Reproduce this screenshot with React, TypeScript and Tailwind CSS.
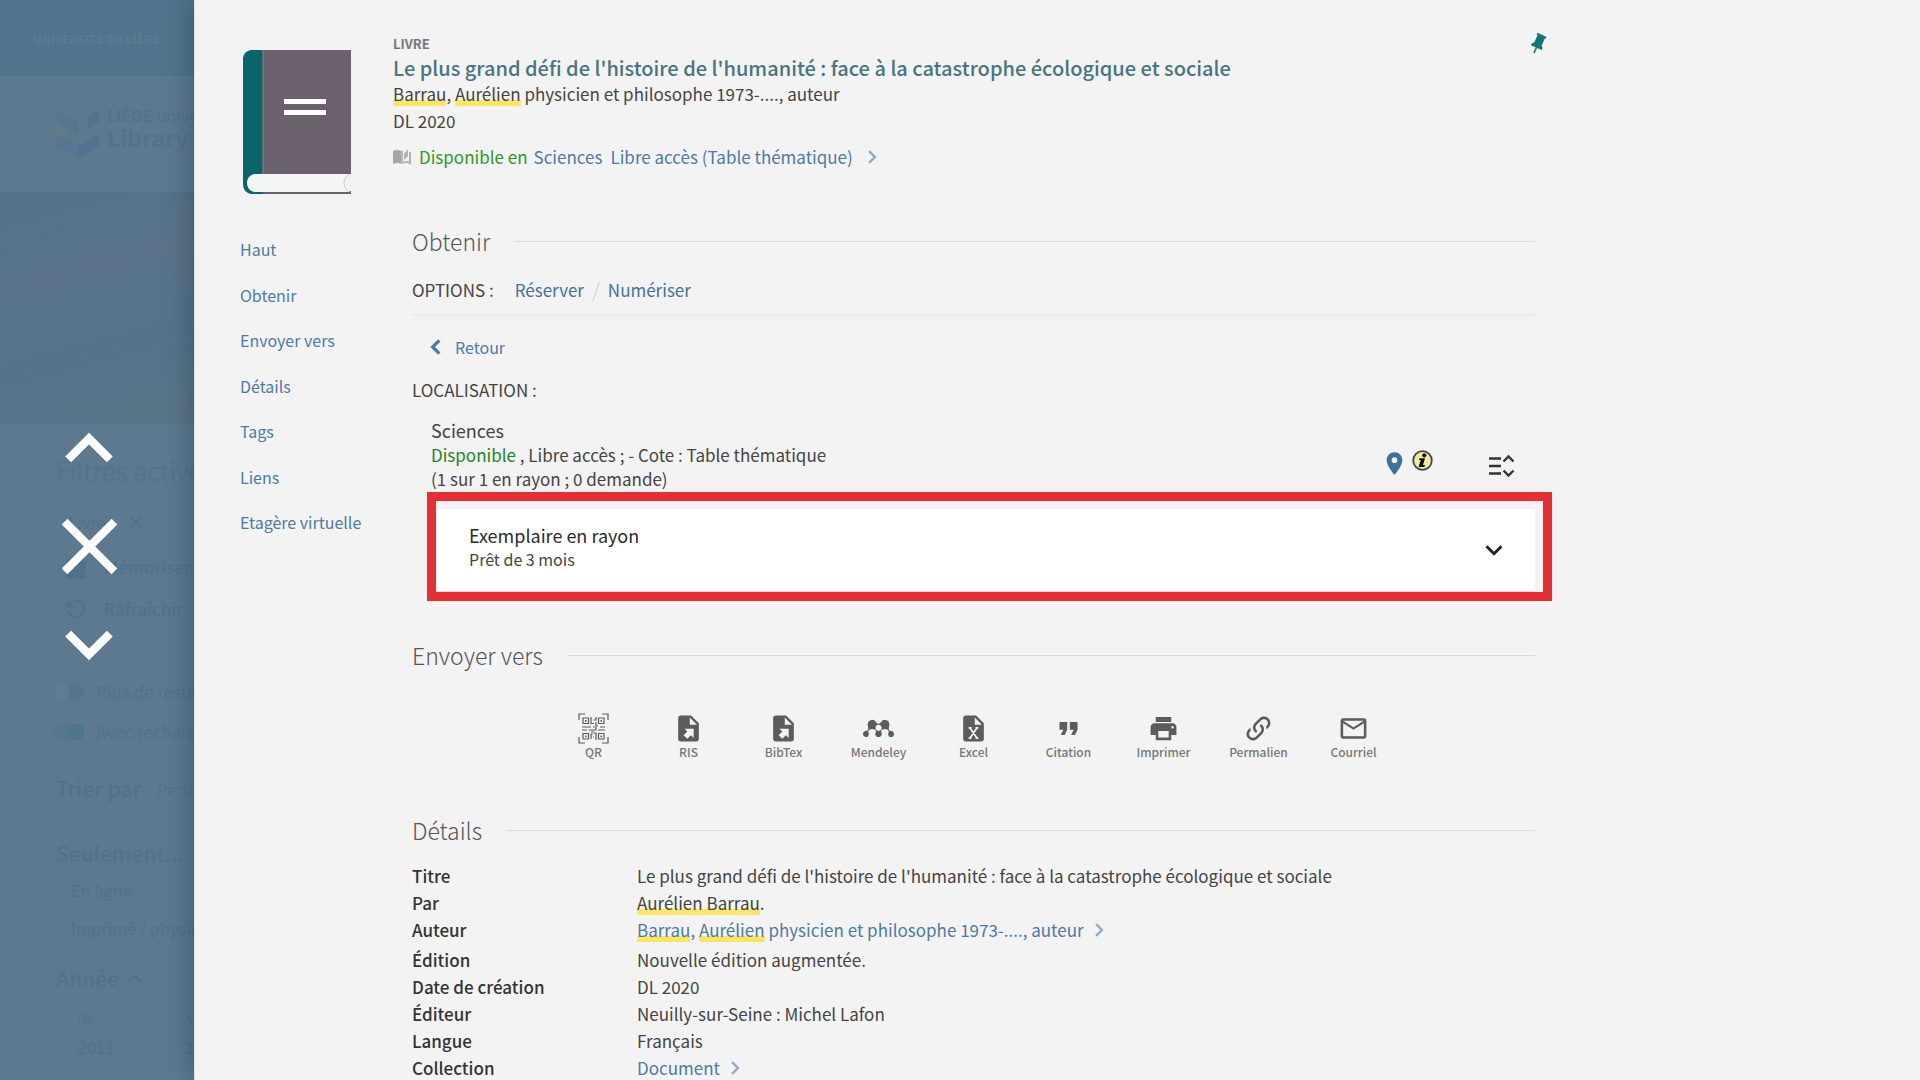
import React from "react";
import { MdFormatQuote, MdOutlineMail, MdPlace, MdPrint, MdRefresh } from "react-icons/md";
import { SiMendeley } from "react-icons/si";

interface IconProps {
  className?: string;
}

interface ChevronProps extends IconProps {
  direction: "up" | "down" | "left" | "right";
  strokeWidth?: number;
}

const chevronPoints = {
  up: "2,17 12,7 22,17",
  down: "2,7 12,17 22,7",
  left: "17,2 7,12 17,22",
  right: "7,2 17,12 7,22",
};

function Chevron({ direction, strokeWidth = 3, className }: ChevronProps) {
  return (
    <svg viewBox="0 0 24 24" className={className} fill="none" stroke="currentColor" strokeWidth={strokeWidth}>
      <polyline points={chevronPoints[direction]} />
    </svg>
  );
}

function Cross({ strokeWidth = 3, className }: IconProps & { strokeWidth?: number }) {
  return (
    <svg viewBox="0 0 24 24" className={className} fill="none" stroke="currentColor" strokeWidth={strokeWidth}>
      <path d="M1.5 1.5 22.5 22.5M22.5 1.5 1.5 22.5" />
    </svg>
  );
}

function PinIcon({ className }: IconProps) {
  return (
    <svg viewBox="0 0 24 24" className={className} fill="currentColor">
      <path transform="rotate(24 12 12)" d="M16,12V4H17V2H7V4H8V12L6,14V16H11.2V22H12.8V16H18V14L16,12Z" />
    </svg>
  );
}

function BookCover({ className }: IconProps) {
  return (
    <svg viewBox="0 0 108 144" className={className}>
      <path d="M20 0H108V124H20Z" fill="#6a616d" />
      <path d="M20 141H108V144H20Z" fill="#6a616d" />
      <path d="M8 0H20V144H8Q0 142 0 134V8Q1 1 8 0Z" fill="#09646b" />
      <path d="M20 0V124" stroke="#a08078" strokeWidth="1" />
      <path d="M11 124H107Q101 127 101 133T107 142H11Q4 140 4 133T11 124Z" fill="#f4f5f7" />
      <path d="M107 124Q101 127 101 133T107 142" fill="none" stroke="#c9c9cc" />
      <path d="M41 49H83V54H41ZM41 60H83V65H41Z" fill="#fff" />
    </svg>
  );
}

function OpenBook({ className }: IconProps) {
  return (
    <svg viewBox="0 0 18 16" className={className}>
      <path d="M0 2Q4 0 8.500 2V15Q4 13 0 15Z" fill="#a6a6a6" />
      <path d="M9 14Q13 12 17 14V3" fill="none" stroke="#b3b3b3" strokeWidth="2" />
      <path d="M8.500 2 10 1.500V12L8.500 14Z" fill="#b3b3b3" />
      <path d="M11 5 15 0V7L11 11Z" fill="#b3b3b3" />
    </svg>
  );
}

function InfoIcon({ className }: IconProps) {
  return (
    <svg viewBox="0 0 21 21" className={className}>
      <circle cx="10.500" cy="10.500" r="9.300" fill="#eeeba0" stroke="#454540" strokeWidth="1.800" />
      <circle cx="12.300" cy="5.300" r="2.100" fill="#111" />
      <path d="M7.500 8.300H13L11 15H13L12.300 17H6.600L8.700 10H7Z" fill="#111" />
    </svg>
  );
}

function ExpandList({ className }: IconProps) {
  return (
    <svg viewBox="0 0 26 24" className={className} fill="none" stroke="currentColor" strokeWidth="2.400">
      <path d="M0 4.500H12M0 12H12M0 19.500H12" />
      <path d="M14.500 7.500 19.500 2.500 24.500 7.500M14.500 16.500 19.500 21.500 24.500 16.500" />
    </svg>
  );
}

function FileExport({ className }: IconProps) {
  return (
    <svg viewBox="0 0 24 24" className={className} fill="currentColor">
      <path d="M6,2C4.89,2 4,2.9 4,4V20A2,2 0 0,0 6,22H18A2,2 0 0,0 20,20V8L14,2M13,3.5L18.5,9H13M8.93,12.22H16V19.29L13.88,17.17L11.05,20L8.22,17.17L11.05,14.35" />
    </svg>
  );
}

function FileExcel({ className }: IconProps) {
  return (
    <svg viewBox="0 0 24 24" className={className}>
      <path fill="currentColor" d="M6,2C4.89,2 4,2.9 4,4V20A2,2 0 0,0 6,22H18A2,2 0 0,0 20,20V8L14,2M13,3.5L18.5,9H13" />
      <path d="M9.200 11.500 14.800 19.500M14.800 11.500 9.200 19.500M8.200 11.500H10.500M13.500 11.500H15.800M8.200 19.500H10.500M13.500 19.500H15.800" fill="none" stroke="#f3f3f3" strokeWidth="1.300" />
    </svg>
  );
}

function LinkIcon({ className }: IconProps) {
  return (
    <svg viewBox="0 0 24 24" className={className} fill="currentColor">
      <path d="M10.59,13.41C11,13.8 11,14.44 10.59,14.83C10.2,15.22 9.56,15.22 9.17,14.83C7.22,12.88 7.22,9.71 9.17,7.76V7.76L12.71,4.22C14.66,2.27 17.83,2.27 19.78,4.22C21.73,6.17 21.73,9.34 19.78,11.29L18.29,12.78C18.3,11.96 18.17,11.14 17.89,10.36L18.36,9.88C19.54,8.71 19.54,6.81 18.36,5.64C17.19,4.46 15.29,4.46 14.12,5.64L10.59,9.17C9.41,10.34 9.41,12.24 10.59,13.41M13.41,9.17C13.8,8.78 14.44,8.78 14.83,9.17C16.78,11.12 16.78,14.29 14.83,16.24V16.24L11.29,19.78C9.34,21.73 6.17,21.73 4.22,19.78C2.27,17.83 2.27,14.66 4.22,12.71L5.71,11.22C5.7,12.04 5.83,12.86 6.11,13.65L5.64,14.12C4.46,15.29 4.46,17.19 5.64,18.36C6.81,19.54 8.71,19.54 9.88,18.36L13.41,14.83C14.59,13.66 14.59,11.76 13.41,10.59C13,10.2 13,9.56 13.41,9.17Z" />
    </svg>
  );
}

function QrIcon({ className }: IconProps) {
  return (
    <svg viewBox="0 0 31 31" className={className} fill="none" stroke="currentColor" strokeWidth="1.200">
      <path d="M1 7V1H7M24 1H30V7M30 24V30H24M7 30H1V24" />
      <path d="M5 5H10.500V10.500H5ZM20.500 5H26V10.500H20.500ZM5 20.500H10.500V26H5ZM20.500 20.500H26V26H20.500Z" />
      <path d="M7 7.800H8.600M22.500 7.800H24.100M7 23.300H8.600M22.500 23.300H24.100" strokeWidth="1.800" />
      <path d="M13 4V10.500H16M18 4V7H15.500M18 9V13H20M4 14H13M15 14H17M22 14H27M4 17H9M11 17H18V14M20 17H27M13 26V21H15M18 27V20H16M15 24H16M13 19H16" />
    </svg>
  );
}

function UniversityLogo({ className }: IconProps) {
  return (
    <svg viewBox="0 0 43 48" className={className}>
      <path d="M0 0 11 6V18L0 12Z" fill="#56788d" />
      <path d="M11 6 22 12V24L11 18Z" fill="#54778c" />
      <path d="M0 12 11 18V30L0 24Z" fill="#607c86" />
      <path d="M11 18 22 24V36L11 30Z" fill="#587b8a" />
      <path d="M0 24 11 30V42L0 36Z" fill="#5e728d" />
      <path d="M11 30 22 36V48L11 42Z" fill="#527896" />
      <path d="M22 36 43 24V36L22 48Z" fill="#567190" />
      <path d="M32 6 43 0V12L32 18Z" fill="#51738b" />
    </svg>
  );
}

function Mark({ children }: { children: React.ReactNode }) {
  return (
    <mark className="bg-transparent bg-[linear-gradient(#ffe564,#ffe564)] bg-[length:100%_6px] bg-bottom bg-no-repeat text-inherit">
      {children}
    </mark>
  );
}

function SectionTitle({ children }: { children: React.ReactNode }) {
  return (
    <div className="flex h-8 items-center gap-6">
      <h2 className="text-[23px] leading-8 font-light text-[#555]">{children}</h2>
      <span className="h-px flex-1 bg-[#dcdcdc]" />
    </div>
  );
}

function FaintToggle({ label, on = false }: { label: string; on?: boolean }) {
  return (
    <label className="flex h-10 items-center gap-3 text-[17px] text-[#52728b]">
      <input type="checkbox" defaultChecked={on} className="peer sr-only" />
      <span className="flex h-4 w-[30px] shrink-0 items-center justify-start rounded-full bg-[#56748e] peer-checked:justify-end peer-checked:bg-[#58768e] peer-checked:*:bg-[#4d758c]">
        <span className="size-4 rounded-full bg-[#607c94]" />
      </span>
      {label}
    </label>
  );
}

/** Results page dimmed behind the record panel. */
function DimmedPage() {
  return (
    <aside className="w-[194px] shrink-0 overflow-hidden bg-[#5c7990] whitespace-nowrap text-[#52728b]">
      <div className="flex h-19 items-center bg-[#50748b] pt-0.5 pl-[33px] text-xs font-bold text-[#5b7b93]">
        UNIVERSITÉ DE LIÈGE
      </div>
      <div className="flex h-29 items-center gap-2 pl-14 text-[#4f748b]">
        <UniversityLogo className="h-12 w-[43px] shrink-0" />
        <div className="pb-4 font-bold">
          <div className="text-base leading-[22px]">
            LIÈGE <span className="font-medium">université</span>
          </div>
          <div className="text-[23px] leading-[22px]">Library</div>
        </div>
      </div>
      <div className="h-58 bg-[linear-gradient(165deg,#52728a_0%,#597389_35%,#54738a_65%,#597587_100%)]" />

      <div className="flex flex-col pl-14">
        <h2 className="mt-6 text-[26px] leading-11 font-light">Filtres activés</h2>
        <button className="-ml-0.5 mt-3 flex h-9 w-[98px] items-center gap-4 rounded-full border border-[#5a7890] pl-[14px] text-base">
          Livres
          <Cross className="size-[13px]" />
        </button>
        <button className="mt-[6px] flex h-[42px] items-center gap-4 pl-2 text-[17px] font-medium text-[#4f738b]">
          <span className="flex h-6 w-6 items-end justify-center">
            <span className="h-5 w-5 rounded-xs bg-[#4f738b]" />
          </span>
          Mémoriser
        </button>
        <button className="flex h-[42px] items-center gap-[14px] pl-[6px] text-[17px] font-medium text-[#4f738b]">
          <MdRefresh className="size-7 -scale-x-100" />
          Rafraîchir
        </button>
        <div className="mt-[42px] -ml-0.5">
          <FaintToggle label="Plus de résultats" />
          <FaintToggle label="Avec recherche" on />
        </div>
        <div className="mt-[21px] flex h-8 items-center gap-4">
          <h3 className="text-[21px] font-medium">Trier par</h3>
          <span className="text-base">Pertinence</span>
        </div>
        <h3 className="mt-8 text-[21px] leading-8 font-medium">Seulement...</h3>
        <ul className="mt-0.5 pl-[15px] text-base leading-[38px] font-medium">
          <li>En ligne</li>
          <li>Imprimé / physique</li>
        </ul>
        <h3 className="mt-4 flex h-8 items-center gap-2 text-[21px] font-medium">
          Année <Chevron direction="up" className="size-4" />
        </h3>
        <div className="mt-2 flex gap-[75px] pl-[21px]">
          <div className="w-8">
            <div className="text-sm leading-8">De</div>
            <div className="text-[17px] leading-6">2011</div>
          </div>
          <div>
            <div className="text-sm leading-8">À</div>
            <div className="text-[17px] leading-6">2023</div>
          </div>
        </div>
      </div>
    </aside>
  );
}

const navLinks = ["Haut", "Obtenir", "Envoyer vers", "Détails", "Tags", "Liens", "Etagère virtuelle"];

const sendActions = [
  { label: "QR", icon: QrIcon },
  { label: "RIS", icon: FileExport },
  { label: "BibTex", icon: FileExport },
  { label: "Mendeley", icon: SiMendeley },
  { label: "Excel", icon: FileExcel },
  { label: "Citation", icon: MdFormatQuote },
  { label: "Imprimer", icon: MdPrint },
  { label: "Permalien", icon: LinkIcon },
  { label: "Courriel", icon: MdOutlineMail },
];

function DetailLink({ href, children }: { href: string; children: React.ReactNode }) {
  return (
    <a href={href} className="flex items-center gap-2 pb-[3px] text-[#4d7aa3]">
      <span>{children}</span>
      <Chevron direction="right" strokeWidth={4} className="size-[14px] opacity-60" />
    </a>
  );
}

const details: { label: string; value: React.ReactNode }[] = [
  {
    label: "Titre",
    value: "Le plus grand défi de l'histoire de l'humanité : face à la catastrophe écologique et sociale",
  },
  { label: "Par", value: <><Mark>Aurélien Barrau</Mark>.</> },
  {
    label: "Auteur",
    value: (
      <DetailLink href="#auteur">
        <Mark>Barrau</Mark>, <Mark>Aurélien</Mark> physicien et philosophe 1973-...., auteur
      </DetailLink>
    ),
  },
  { label: "Édition", value: "Nouvelle édition augmentée." },
  { label: "Date de création", value: "DL 2020" },
  { label: "Éditeur", value: "Neuilly-sur-Seine : Michel Lafon" },
  { label: "Langue", value: "Français" },
  { label: "Collection", value: <DetailLink href="#collection">Document</DetailLink> },
];

function RecordHeader() {
  return (
    <header className="flex pt-[30px] pl-[3px]">
      <BookCover className="mt-5 mr-[42px] h-36 w-[108px] shrink-0" />
      <div className="flex-1 pt-[3px] text-[17px] text-[#444]">
        <div className="text-[13px] leading-[22px] font-bold text-[#777]">LIVRE</div>
        <h1 className="text-[20px] leading-[25px] font-medium">
          <a href="#titre" className="text-[#477580]">
            Le plus grand défi de l'histoire de l'humanité : face à la catastrophe écologique et sociale
          </a>
        </h1>
        <p className="leading-[27px]">
          <Mark>Barrau</Mark>, <Mark>Aurélien</Mark> physicien et philosophe 1973-...., auteur
        </p>
        <p className="leading-[27px]">DL 2020</p>
        <p className="mt-[7px] flex h-8 items-center">
          <OpenBook className="mr-2 h-4 w-[18px]" />
          <a href="#disponibilite" className="flex items-center text-[#4d7aa3]">
            <span className="mr-[6px] text-[#2d9a27]">Disponible en</span>
            <span className="mr-2">Sciences</span>
            <span>Libre accès (Table thématique)</span>
            <Chevron direction="right" strokeWidth={4} className="ml-3 size-[14px] opacity-60" />
          </a>
        </p>
      </div>
      <button aria-label="Épingler" className="-mr-[15px] h-7 self-start text-[#14777a]">
        <PinIcon className="size-6" />
      </button>
    </header>
  );
}

function ObtenirSection() {
  return (
    <section>
      <SectionTitle>Obtenir</SectionTitle>
      <div className="mt-4 flex h-[43px] items-start border-b-2 border-[#ebebeb] pt-px text-[17px] leading-8 text-[#444]">
        <span className="mr-[21px]">OPTIONS :</span>
        <a href="#reserver" className="text-[#44709b]">Réserver</a>
        <span className="mx-2 text-[20px] font-light text-[#d0d0d0]">/</span>
        <a href="#numeriser" className="text-[#44709b]">Numériser</a>
      </div>
      <button className="mt-[15px] ml-4 flex h-8 items-center gap-[11px] text-base text-[#4d7aa3]">
        <Chevron direction="left" strokeWidth={5} className="size-4" />
        Retour
      </button>
      <h3 className="mt-[11px] text-[17px] leading-8 text-[#444]">LOCALISATION :</h3>
      <div className="mt-3 flex items-end justify-between pb-0.5 pl-[19px]">
        <div className="text-[17px] leading-6 text-[#444]">
          <div className="text-lg leading-[25px]">Sciences</div>
          <div>
            <span className="text-[#22861f]">Disponible</span> , Libre accès ; - Cote : Table thématique
          </div>
          <div className="leading-[23px]">(1 sur 1 en rayon ; 0 demande)</div>
        </div>
        <div className="mr-5 flex h-10 items-start">
          <MdPlace className="size-[27px] text-[#3c729b]" />
          <InfoIcon className="ml-1 size-[21px]" />
          <ExpandList className="mt-1 ml-14 h-6 w-[26px] text-[#333]" />
        </div>
      </div>
      <div className="-mr-[17px] ml-[15px] border-9 border-[#e62e33] pt-2 pr-2">
        <button className="flex h-[83px] w-full items-center justify-between border-b border-[#ddd] bg-white pr-8 pl-[33px] text-left">
          <span className="pb-[7px]">
            <span className="block text-lg leading-6 text-[#2b2b2b]">Exemplaire en rayon</span>
            <span className="block text-base leading-6 text-[#444]">Prêt de 3 mois</span>
          </span>
          <Chevron direction="down" strokeWidth={4} className="size-[18px] text-[#222]" />
        </button>
      </div>
    </section>
  );
}

function EnvoyerSection() {
  return (
    <section className="mt-[38px]">
      <SectionTitle>Envoyer vers</SectionTitle>
      <ul className="mt-[42px] flex justify-center">
        {sendActions.map(({ label, icon: Icon }) => (
          <li key={label} className="w-[95px]">
            <button className="flex w-full flex-col items-center text-[#5c5c5c]">
              <Icon className="size-[31px]" />
              <span className="text-xs leading-4 font-medium text-[#777]">{label}</span>
            </button>
          </li>
        ))}
      </ul>
    </section>
  );
}

function DetailsSection() {
  return (
    <section className="mt-[54px]">
      <SectionTitle>Détails</SectionTitle>
      <table className="mt-4 w-full text-left text-[17px] leading-[27px] text-[#444]">
        <tbody>
          {details.map(({ label, value }) => (
            <tr key={label} className="align-top">
              <th scope="row" className="w-[225px] p-0 font-medium text-[#333]">{label}</th>
              <td className="p-0">{value}</td>
            </tr>
          ))}
        </tbody>
      </table>
    </section>
  );
}

export default function App() {
  return (
    <div className="relative flex h-screen overflow-hidden font-['Noto_Sans_CJK_SC','Source_Sans_Pro',sans-serif]">
      <DimmedPage />

      <div className="absolute inset-y-0 left-0 flex w-[178px] flex-col items-center justify-center gap-11 pt-3 text-white">
        <button aria-label="Précédent">
          <Chevron direction="up" strokeWidth={4} className="size-[50px]" />
        </button>
        <button aria-label="Fermer">
          <Cross strokeWidth={3.4} className="size-[57px]" />
        </button>
        <button aria-label="Suivant">
          <Chevron direction="down" strokeWidth={4} className="size-[50px]" />
        </button>
      </div>

      <main className="relative flex-1 border-l border-[#dde1e5] bg-[#f3f3f3] pr-[385px] pl-[45px] shadow-[0_0_26px_rgba(0,0,0,0.3)]">
        <RecordHeader />
        <div className="mt-[31px] flex">
          <nav className="w-[172px] shrink-0 pt-3">
            <ul className="flex h-[297px] flex-col justify-between text-base leading-6">
              {navLinks.map((link) => (
                <li key={link}>
                  <a href={"#" + link} className="text-[#4d7aa3]">{link}</a>
                </li>
              ))}
            </ul>
          </nav>
          <div className="min-w-0 flex-1">
            <ObtenirSection />
            <EnvoyerSection />
            <DetailsSection />
          </div>
        </div>
      </main>
    </div>
  );
}
